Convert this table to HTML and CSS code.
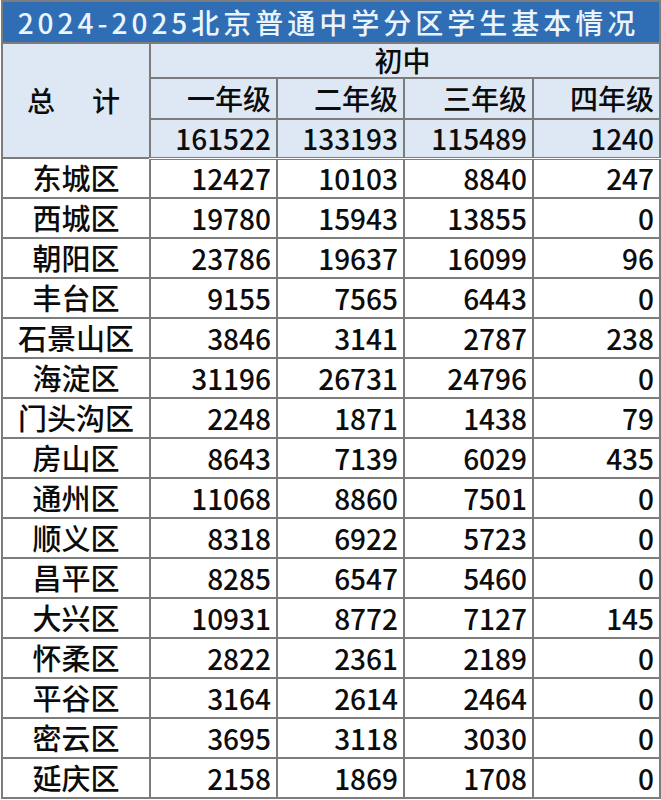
FILE: index.html
```html
<!DOCTYPE html>
<html lang="zh-CN">
<head>
<meta charset="utf-8">
<title>2024-2025北京普通中学分区学生基本情况</title>
<link rel="stylesheet" href="styles.css">
</head>
<body>
<table class="sheet">
  <colgroup>
    <col class="c-name">
    <col class="c-g1">
    <col class="c-g2">
    <col class="c-g3">
    <col class="c-g4">
  </colgroup>
  <thead>
    <tr class="r-title"><th colspan="5" class="title">2024-2025北京普通中学分区学生基本情况</th></tr>
    <tr class="r-group"><th rowspan="3" class="total-label">总<span class="gap"></span>计</th><th colspan="4" class="group">初中</th></tr>
    <tr class="r-grade"><th class="grade">一年级</th><th class="grade">二年级</th><th class="grade">三年级</th><th class="grade">四年级</th></tr>
    <tr class="r-sum"><td>161522</td><td>133193</td><td>115489</td><td>1240</td></tr>
  </thead>
  <tbody>
    <tr><th>东城区</th><td>12427</td><td>10103</td><td>8840</td><td>247</td></tr>
    <tr><th>西城区</th><td>19780</td><td>15943</td><td>13855</td><td>0</td></tr>
    <tr><th>朝阳区</th><td>23786</td><td>19637</td><td>16099</td><td>96</td></tr>
    <tr><th>丰台区</th><td>9155</td><td>7565</td><td>6443</td><td>0</td></tr>
    <tr><th>石景山区</th><td>3846</td><td>3141</td><td>2787</td><td>238</td></tr>
    <tr><th>海淀区</th><td>31196</td><td>26731</td><td>24796</td><td>0</td></tr>
    <tr><th>门头沟区</th><td>2248</td><td>1871</td><td>1438</td><td>79</td></tr>
    <tr><th>房山区</th><td>8643</td><td>7139</td><td>6029</td><td>435</td></tr>
    <tr><th>通州区</th><td>11068</td><td>8860</td><td>7501</td><td>0</td></tr>
    <tr><th>顺义区</th><td>8318</td><td>6922</td><td>5723</td><td>0</td></tr>
    <tr><th>昌平区</th><td>8285</td><td>6547</td><td>5460</td><td>0</td></tr>
    <tr><th>大兴区</th><td>10931</td><td>8772</td><td>7127</td><td>145</td></tr>
    <tr><th>怀柔区</th><td>2822</td><td>2361</td><td>2189</td><td>0</td></tr>
    <tr><th>平谷区</th><td>3164</td><td>2614</td><td>2464</td><td>0</td></tr>
    <tr><th>密云区</th><td>3695</td><td>3118</td><td>3030</td><td>0</td></tr>
    <tr><th>延庆区</th><td>2158</td><td>1869</td><td>1708</td><td>0</td></tr>
  </tbody>
</table>
</body>
</html>
```
FILE: styles.css
```css
html, body {
  margin: 0;
  padding: 0;
  background: #ffffff;
}
body {
  font-family: "Noto Sans CJK SC", "Noto Sans", sans-serif;
  color: #0c0c0c;
}
.sheet {
  margin-left: 1px;
  border-collapse: collapse;
  table-layout: fixed;
  width: 658px;
  border: 2px solid #3a3a3a;
}
.c-name { width: 148px; }
.c-g1 { width: 127px; }
.c-g2 { width: 127px; }
.c-g3 { width: 129px; }
.c-g4 { width: 127px; }

.sheet th, .sheet td {
  border: 2px solid #7c7c7c;
  padding: 0 5px 0 0;
  font-size: 28px;
  line-height: 1.1;
  font-weight: 500;
  white-space: nowrap;
}
.sheet td { text-align: right; }
.sheet tbody th {
  text-align: center;
  padding: 0;
  font-size: 29px;
}
.sheet tbody tr { height: 40px; }

.r-title { height: 42px; }
.title {
  background: #2f6db4;
  color: #eaf4fc;
  font-size: 33px;
  text-align: center;
  border: 2px solid #23466e;
  padding: 0;
  letter-spacing: 4px;
}
.r-group { height: 35px; }
.r-grade { height: 41px; }
.r-sum { height: 39px; }
.sheet thead th:not(.title),
.sheet thead td {
  background: #dde8f4;
}
.group {
  text-align: center;
  padding: 0;
}
.grade { text-align: right; }
.total-label {
  text-align: center;
  padding: 0;
  font-size: 29px;
}
.gap {
  display: inline-block;
  width: 37px;
}
.sheet thead tr.r-sum td { border-bottom: 3px double #7c7c7c; }
```
